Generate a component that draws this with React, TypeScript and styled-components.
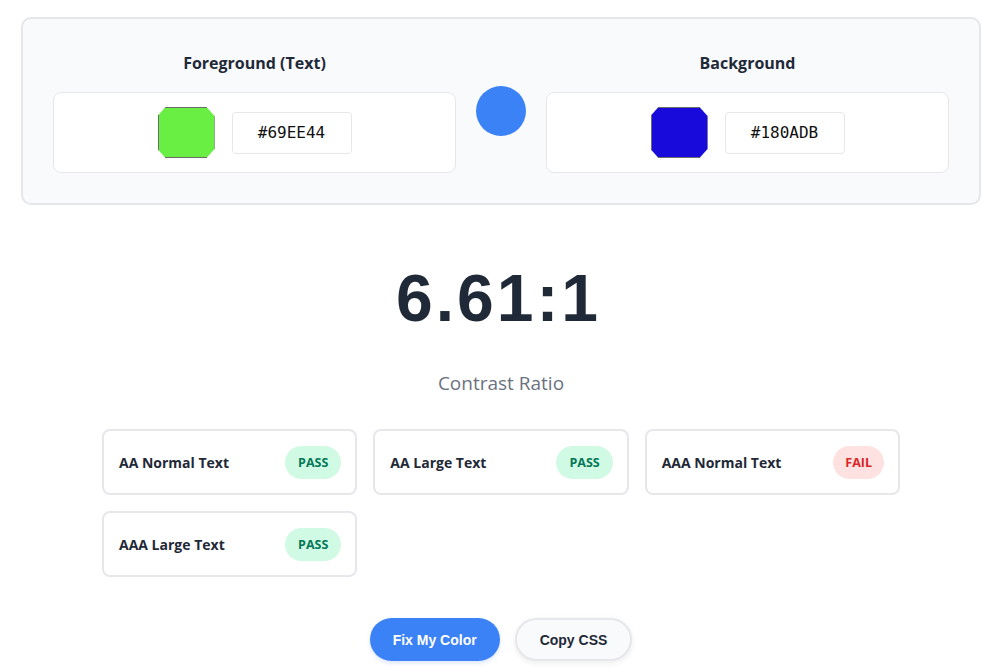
import React, { useState } from "react";
import styled, { createGlobalStyle } from "styled-components";

const GlobalStyle = createGlobalStyle`
  * { box-sizing: border-box; }
  body {
    margin: 0;
    background: #ffffff;
    font-family: "Open Sans", "Noto Sans", sans-serif;
    color: #1f2937;
  }
`;

const Page = styled.div`
  padding: 17px 2px 40px 21px;
`;

const PickerPanel = styled.section`
  display: grid;
  grid-template-columns: 1fr 50px 1fr;
  align-items: center;
  gap: 20px;
  padding: 30px;
  background: #f8fafc;
  border: 2px solid #e5e7eb;
  border-radius: 10px;
`;

const PickerColumn = styled.div`
  display: flex;
  flex-direction: column;
`;

const PickerTitle = styled.h3`
  margin: 2px 0 17px;
  font-size: 16px;
  line-height: 24px;
  font-weight: 700;
  text-align: center;
  color: #1f2937;
`;

const PickerBox = styled.div`
  display: flex;
  align-items: center;
  justify-content: center;
  gap: 17px;
  padding: 14px;
  background: #ffffff;
  border: 1px solid #e5e7eb;
  border-radius: 8px;
`;

const Swatch = styled.div<{ $color: string }>`
  width: 57px;
  height: 51px;
  background: ${(p) => p.$color};
  border: 1px solid #6b6b6b;
  clip-path: polygon(8px 0, calc(100% - 8px) 0, 100% 9px, 100% calc(100% - 9px), calc(100% - 8px) 100%, 8px 100%, 0 calc(100% - 9px), 0 9px);
`;

const HexInput = styled.input`
  width: 120px;
  height: 42px;
  border: 1px solid #e5e7eb;
  border-radius: 4px;
  background: #ffffff;
  font-family: "DejaVu Sans Mono", "Liberation Mono", monospace;
  font-size: 16px;
  color: #111111;
  text-align: center;
  outline: none;
`;

const SwapDot = styled.button`
  width: 50px;
  height: 50px;
  border: none;
  border-radius: 50%;
  background: #3b82f6;
  padding: 0;
  cursor: pointer;
`;

const RatioBlock = styled.div`
  display: flex;
  flex-direction: column;
  align-items: center;
  margin-top: 55px;
`;

const RatioValue = styled.div`
  margin-right: 5px;
  font-family: "Liberation Sans", Arial, sans-serif;
  font-size: 66px;
  font-weight: 700;
  letter-spacing: 3px;
  line-height: 76px;
  color: #1f2937;
`;

const RatioLabel = styled.div`
  margin-top: 34px;
  font-size: 19px;
  line-height: 27px;
  color: #6b7280;
`;

const ResultGrid = styled.div`
  display: grid;
  grid-template-columns: repeat(3, 1fr);
  gap: 16px;
  width: 798px;
  margin: 32px auto 0;
`;

const ResultCard = styled.div`
  display: flex;
  align-items: center;
  justify-content: space-between;
  height: 66px;
  padding: 0 14px 0 15px;
  background: #ffffff;
  border: 2px solid #e5e7eb;
  border-radius: 8px;
`;

const ResultName = styled.span`
  font-size: 14px;
  font-weight: 700;
  color: #1f2937;
`;

const Badge = styled.span<{ $pass: boolean }>`
  display: inline-flex;
  align-items: center;
  justify-content: center;
  height: 33px;
  padding: 0 ${(p) => (p.$pass ? 13 : 12)}px;
  border-radius: 999px;
  font-size: 12.5px;
  font-weight: 700;
  background: ${(p) => (p.$pass ? "#d1fae5" : "#fee2e2")};
  color: ${(p) => (p.$pass ? "#047857" : "#dc2626")};
`;

const Actions = styled.div`
  display: flex;
  justify-content: center;
  gap: 15px;
  margin-top: 41px;
`;

const ActionButton = styled.button<{ $primary?: boolean }>`
  height: 43px;
  padding: 0 23px;
  border-radius: 999px;
  font-family: "Liberation Sans", Arial, sans-serif;
  font-size: 14px;
  font-weight: 700;
  cursor: pointer;
  border: ${(p) => (p.$primary ? "none" : "2px solid #e5e7eb")};
  background: ${(p) => (p.$primary ? "#3b82f6" : "#f8fafc")};
  color: ${(p) => (p.$primary ? "#ffffff" : "#1f2937")};
  box-shadow: ${(p) => (p.$primary ? "0 2px 4px rgba(59,130,246,0.2)" : "0 2px 6px rgba(0,0,0,0.08)")};
`;

const results = [
  { name: "AA Normal Text", pass: true },
  { name: "AA Large Text", pass: true },
  { name: "AAA Normal Text", pass: false },
  { name: "AAA Large Text", pass: true },
];

export default function App() {
  const [fg, setFg] = useState("#69EE44");
  const [bg, setBg] = useState("#180ADB");

  return (
    <Page>
      <GlobalStyle />
      <PickerPanel>
        <PickerColumn>
          <PickerTitle>Foreground (Text)</PickerTitle>
          <PickerBox>
            <Swatch $color={fg} />
            <HexInput value={fg} onChange={(e) => setFg(e.target.value)} />
          </PickerBox>
        </PickerColumn>
        <SwapDot aria-label="Swap colors" onClick={() => { setFg(bg); setBg(fg); }} />
        <PickerColumn>
          <PickerTitle>Background</PickerTitle>
          <PickerBox>
            <Swatch $color={bg} />
            <HexInput value={bg} onChange={(e) => setBg(e.target.value)} />
          </PickerBox>
        </PickerColumn>
      </PickerPanel>

      <RatioBlock>
        <RatioValue>6.61:1</RatioValue>
        <RatioLabel>Contrast Ratio</RatioLabel>
      </RatioBlock>

      <ResultGrid>
        {results.map((r) => (
          <ResultCard key={r.name}>
            <ResultName>{r.name}</ResultName>
            <Badge $pass={r.pass}>{r.pass ? "PASS" : "FAIL"}</Badge>
          </ResultCard>
        ))}
      </ResultGrid>

      <Actions>
        <ActionButton $primary>Fix My Color</ActionButton>
        <ActionButton>Copy CSS</ActionButton>
      </Actions>
    </Page>
  );
}
